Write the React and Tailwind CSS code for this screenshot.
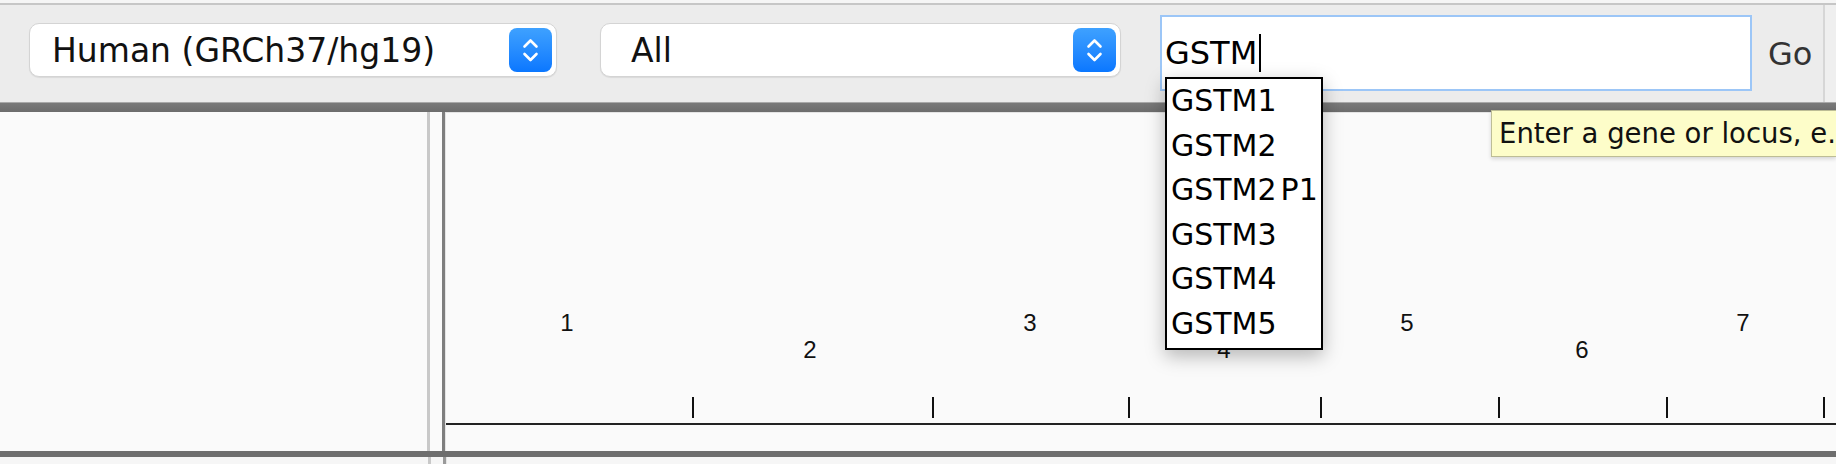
import React from "react";

function Chevrons() {
  return (
    <svg width="43" height="44" viewBox="0 0 43 44" fill="none">
      <path d="M15.5 18.5 L21.5 12.5 L27.5 18.5" stroke="white" strokeWidth="2.6" strokeLinecap="round" strokeLinejoin="round" />
      <path d="M15.5 26 L21.5 32 L27.5 26" stroke="white" strokeWidth="2.6" strokeLinecap="round" strokeLinejoin="round" />
    </svg>
  );
}

function Select({ label, widthClass, mlClass, plClass }) {
  return (
    <div
      className={`${widthClass} ${mlClass} mt-[18px] h-[54px] bg-white rounded-[10px] border border-[#d4d4d4] shadow-[0_1px_1px_rgba(0,0,0,0.08)] flex items-center ${plClass} pr-[4px]`}
    >
      <span className="flex-1 text-[33px] leading-none text-[#111]">{label}</span>
      <div className="w-[43px] h-[44px] rounded-[8px] bg-linear-to-b from-[#3ea1ff] to-[#0a77ff] flex items-center justify-center">
        <Chevrons />
      </div>
    </div>
  );
}

export default function App() {
  const ticks = [247, 487, 683, 875, 1053, 1221, 1378];
  const labels = [
    ["1", 121, 209],
    ["2", 364, 236],
    ["3", 584, 209],
    ["4", 778, 236],
    ["5", 961, 209],
    ["6", 1136, 236],
    ["7", 1297, 209],
  ];
  const items = ["GSTM1", "GSTM2", "GSTM2P1", "GSTM3", "GSTM4", "GSTM5"];

  return (
    <div className="relative w-[1836px] h-[464px] overflow-hidden bg-[#fafafa] flex flex-col font-['DejaVu_Sans',sans-serif]">
      {/* top edge */}
      <div className="h-[3px] bg-[#f5f5f5]" />
      <div className="h-[2px] bg-[#c6c6c6]" />

      {/* toolbar */}
      <div className="h-[97px] bg-[#ececec] flex items-start pl-[29px]">
        <Select label="Human (GRCh37/hg19)" widthClass="w-[528px]" mlClass="ml-0" plClass="pl-[22px]" />
        <Select label="All" widthClass="w-[521px]" mlClass="ml-[43px]" plClass="pl-[30px]" />
        <div className="ml-[39px] mt-[10px] h-[76px] w-[592px] bg-white border-2 border-[#9cc6f7] flex items-center pl-[3px]">
          <span className="text-[32px] leading-none text-black">GSTM</span>
          <span className="ml-[2px] w-[2px] h-[38px] bg-black" />
        </div>
        <div className="ml-[16px] w-[55px] self-stretch flex items-center">
          <span className="text-[32px] leading-none text-[#333]">Go</span>
        </div>
        <div className="w-[2px] self-stretch bg-[#d6d6d6]" />
        <div className="flex-1 self-stretch bg-[#efefef]" />
      </div>

      {/* separator bar */}
      <div className="h-[1px] bg-[#a9a9a9]" />
      <div className="h-[9px] bg-linear-to-b from-[#7a7a7a] to-[#6c6c6c]" />

      {/* main panels */}
      <div className="h-[339px] flex">
        <div className="w-[428px] bg-[#fafafa]" />
        <div className="w-[3px] bg-[#c8c8c8]" />
        <div className="w-[12px] bg-[#fafafa]" />
        <div className="w-[3px] bg-[#7e7e7e]" />
        <div className="flex-1 bg-[#fafafa] border-t border-l border-[#e4e4e4]">
          <svg width="1390" height="338" className="block">
            {labels.map(([t, x, y]) => (
              <text
                key={t}
                x={x}
                y={y}
                textAnchor="middle"
                dominantBaseline="central"
                fontFamily="'Liberation Sans', Arial, sans-serif"
                fontSize="24"
                fill="#111"
              >
                {t}
              </text>
            ))}
            {ticks.map((x) => (
              <rect key={x} x={x - 1} y={284} width={2} height={21} fill="#111" />
            ))}
            <rect x={0} y={310} width={1390} height={2} fill="#222" />
          </svg>
        </div>
      </div>

      {/* bottom bar */}
      <div className="h-[6px] bg-[#6e6e6e]" />
      <div className="h-[7px] flex">
        <div className="w-[428px] bg-[#f6f6f6]" />
        <div className="w-[3px] bg-[#c8c8c8]" />
        <div className="w-[12px] bg-[#f6f6f6]" />
        <div className="w-[3px] bg-[#9a9a9a]" />
        <div className="flex-1 bg-[#f6f6f6] border-l border-[#e4e4e4]" />
      </div>

      {/* autocomplete dropdown */}
      <div className="absolute left-[1165px] top-[77px] w-[158px] h-[273px] bg-white border-2 border-black shadow-[0_6px_18px_rgba(0,0,0,0.28)] pl-[4px]">
        {items.map((it) => (
          <div key={it} className="text-[30px] leading-[44.5px] text-black whitespace-nowrap">
            {it === "GSTM2P1" ? (
              <>
                GSTM2<span className="ml-[4px]">P1</span>
              </>
            ) : (
              it
            )}
          </div>
        ))}
      </div>

      {/* tooltip */}
      <div className="absolute left-[1491px] top-[110px] h-[47px] w-[345px] overflow-hidden bg-[#fdfdc9] border border-[#bdbd96] border-r-0 shadow-[0_2px_4px_rgba(0,0,0,0.15)] flex items-center pl-[7px]">
        <span className="text-[27.5px] leading-none text-[#111] whitespace-nowrap">Enter a gene or locus, e.g. EGFR</span>
      </div>
    </div>
  );
}
